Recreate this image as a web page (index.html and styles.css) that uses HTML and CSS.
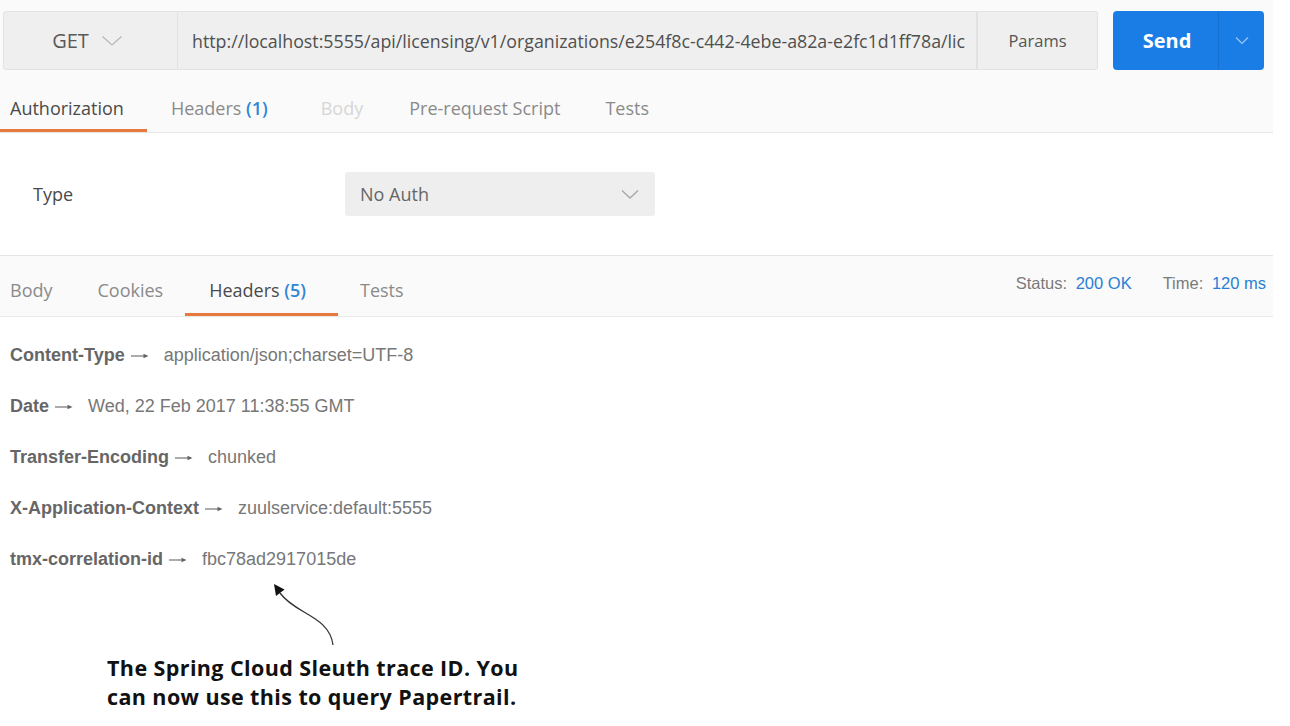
FILE: index.html
```html
<!DOCTYPE html>
<html>
<head>
<meta charset="utf-8">
<link rel="stylesheet" href="styles.css">
</head>
<body>
<div class="page">
  <section class="request">
    <div class="urlbar">
      <div class="field method">
        <span>GET</span>
        <svg class="chev" width="22" height="12" viewBox="0 0 22 12"><path d="M1.5 1.5 L11 10 L20.5 1.5" fill="none" stroke="#b8b8b8" stroke-width="1.3"/></svg>
      </div>
      <div class="field url"><span>http://localhost:5555/api/licensing/v1/organizations/e254f8c-c442-4ebe-a82a-e2fc1d1ff78a/lic</span></div>
      <div class="field params">Params</div>
      <div class="send">
        <span class="send-label">Send</span>
        <span class="send-more"><svg width="14" height="9" viewBox="0 0 14 9"><path d="M1 1.5 L7 7.5 L13 1.5" fill="none" stroke="#9fc7f3" stroke-width="1.2"/></svg></span>
      </div>
    </div>
    <nav class="tabs req-tabs">
      <span class="tab active">Authorization</span>
      <span class="tab">Headers <b class="count">(1)</b></span>
      <span class="tab disabled">Body</span>
      <span class="tab">Pre-request Script</span>
      <span class="tab">Tests</span>
    </nav>
  </section>

  <section class="auth">
    <span class="auth-label">Type</span>
    <div class="select">
      <span>No Auth</span>
      <svg width="18" height="10" viewBox="0 0 18 10"><path d="M1 1.5 L9 9 L17 1.5" fill="none" stroke="#a8a8a8" stroke-width="1.4"/></svg>
    </div>
  </section>

  <section class="resp-bar">
    <nav class="tabs resp-tabs">
      <span class="tab">Body</span>
      <span class="tab">Cookies</span>
      <span class="tab active">Headers <b class="count">(5)</b></span>
      <span class="tab">Tests</span>
    </nav>
    <div class="status">
      <span>Status: <em>200 OK</em></span>
      <span>Time: <em>120 ms</em></span>
    </div>
  </section>

  <section class="headers">
    <div class="row"><b>Content-Type</b><svg class="to" width="18" height="8" viewBox="0 0 18 8"><path d="M0 4 H16" stroke="#666" stroke-width="1.1"/><path d="M12.5 1.8 L17.5 4 L12.5 6.2 Z" fill="#666"/></svg><span>application/json;charset=UTF-8</span></div>
    <div class="row"><b>Date</b><svg class="to" width="18" height="8" viewBox="0 0 18 8"><path d="M0 4 H16" stroke="#666" stroke-width="1.1"/><path d="M12.5 1.8 L17.5 4 L12.5 6.2 Z" fill="#666"/></svg><span>Wed, 22 Feb 2017 11:38:55 GMT</span></div>
    <div class="row"><b>Transfer-Encoding</b><svg class="to" width="18" height="8" viewBox="0 0 18 8"><path d="M0 4 H16" stroke="#666" stroke-width="1.1"/><path d="M12.5 1.8 L17.5 4 L12.5 6.2 Z" fill="#666"/></svg><span>chunked</span></div>
    <div class="row"><b>X-Application-Context</b><svg class="to" width="18" height="8" viewBox="0 0 18 8"><path d="M0 4 H16" stroke="#666" stroke-width="1.1"/><path d="M12.5 1.8 L17.5 4 L12.5 6.2 Z" fill="#666"/></svg><span>zuulservice:default:5555</span></div>
    <div class="row"><b>tmx-correlation-id</b><svg class="to" width="18" height="8" viewBox="0 0 18 8"><path d="M0 4 H16" stroke="#666" stroke-width="1.1"/><path d="M12.5 1.8 L17.5 4 L12.5 6.2 Z" fill="#666"/></svg><span>fbc78ad2917015de</span></div>
  </section>

  <p class="caption">The Spring Cloud Sleuth trace ID. You<br>can now use this to query Papertrail.</p>

  <svg class="arrow" width="1290" height="726" viewBox="0 0 1290 726">
    <path d="M333 645 C331 628 318 620 304 612 C292 605 285 600 280 593" fill="none" stroke="#333" stroke-width="1.3"/>
    <polygon points="274,584 284.5,589.5 276,596" fill="#111"/>
  </svg>
</div>
</body>
</html>
```

FILE: styles.css
```css
* { box-sizing: border-box; }
html, body { margin: 0; padding: 0; background: #fff; }
.page {
  position: relative;
  width: 1290px;
  height: 726px;
  overflow: hidden;
  font-family: "Open Sans", "Liberation Sans", sans-serif;
}

.request {
  width: 1273px;
  background: #fafafa;
  padding-top: 11px;
  border-bottom: 1px solid #e6e6e6;
}
.urlbar {
  display: flex;
  height: 59px;
  padding-left: 3px;
}
.field {
  background: #efefef;
  border: 1px solid #e2e2e2;
  display: flex;
  align-items: center;
  color: #555;
}
.method {
  width: 175px;
  border-radius: 3px 0 0 3px;
  justify-content: center;
  gap: 12px;
  font-size: 20px;
  color: #595959;
  padding-right: 6px;
}
.method .chev { margin-top: 1px; }
.url {
  width: 799px;
  border-left: none;
  overflow: hidden;
  white-space: nowrap;
  padding-left: 14px;
  font-size: 17.8px;
  color: #505050;
}
.params {
  width: 121px;
  border-left: 1px solid #e0e0e0;
  border-radius: 0 3px 3px 0;
  justify-content: center;
  font-size: 16.5px;
  color: #555;
}
.send {
  margin-left: 15px;
  width: 151px;
  background: #1a7de6;
  border-radius: 4px;
  display: flex;
  align-items: stretch;
  color: #fff;
}
.send-label {
  flex: 1;
  display: flex;
  align-items: center;
  justify-content: center;
  font-weight: 700;
  font-size: 20px;
  padding-left: 3px;
}
.send-more {
  width: 46px;
  border-left: 1px solid #1670d0;
  display: flex;
  align-items: center;
  justify-content: center;
}

.tabs {
  display: flex;
  align-items: flex-end;
}
.tab {
  color: #8a8a8a;
  white-space: nowrap;
  border-bottom: 3px solid transparent;
}
.tab.active { color: #4a4a4a; border-bottom-color: #e67a3e; }
.tab.disabled { color: #d6d6d6; }
.count { color: #2f86d8; font-weight: 600; }

.req-tabs {
  height: 62px;
  font-size: 18px;
}
.req-tabs .tab {
  line-height: 24px;
  padding: 0 0 9px 0;
}
.req-tabs .tab:nth-child(1) { padding-left: 10px; padding-right: 23px; }
.req-tabs .tab:nth-child(2) { margin-left: 24px; }
.req-tabs .tab:nth-child(3) { margin-left: 53px; }
.req-tabs .tab:nth-child(4) { margin-left: 46px; }
.req-tabs .tab:nth-child(5) { margin-left: 45px; }

.auth {
  height: 122px;
  display: flex;
  align-items: flex-start;
  padding-top: 39px;
}
.auth-label {
  width: 345px;
  padding-left: 33px;
  line-height: 44px;
  font-size: 18px;
  color: #4a4a4a;
}
.select {
  width: 310px;
  height: 44px;
  background: #eeeeee;
  border-radius: 3px;
  display: flex;
  align-items: center;
  justify-content: space-between;
  padding: 0 16px 0 15px;
  font-size: 18px;
  color: #666;
}

.resp-bar {
  width: 1273px;
  height: 62px;
  background: #fafafa;
  border-top: 1px solid #e4e4e4;
  border-bottom: 1px solid #ebebeb;
  display: flex;
  justify-content: space-between;
}
.resp-tabs {
  height: 60px;
  font-size: 18px;
}
.resp-tabs .tab {
  line-height: 24px;
  padding: 0 0 11px 0;
}
.resp-tabs .tab:nth-child(1) { padding-left: 10px; }
.resp-tabs .tab:nth-child(2) { margin-left: 45px; }
.resp-tabs .tab:nth-child(3) { margin-left: 22px; padding-left: 24px; padding-right: 32px; }
.resp-tabs .tab:nth-child(4) { margin-left: 22px; }

.status {
  display: flex;
  gap: 31px;
  padding-top: 17px;
  padding-right: 7px;
  font-family: "Liberation Sans", Arial, sans-serif;
  font-size: 16.5px;
  color: #7a7a7a;
  line-height: 20px;
}
.status em { font-style: normal; color: #2a7fd4; margin-left: 4px; }

.headers {
  padding-top: 13px;
  font-family: "Liberation Sans", Arial, sans-serif;
  font-size: 18px;
  color: #777;
}
.row {
  height: 51px;
  display: flex;
  align-items: center;
  padding-left: 10px;
}
.row b { color: #666; font-weight: 700; }
.row .to { margin: 1px 15px 0 6px; }

.caption {
  margin: 68px 0 0 107px;
  font-family: "Open Sans", Lato, sans-serif;
  font-weight: 700;
  font-size: 21.5px;
  letter-spacing: 0.4px;
  line-height: 29px;
  color: #111;
}

.arrow {
  position: absolute;
  left: 0;
  top: 0;
  pointer-events: none;
}
```
